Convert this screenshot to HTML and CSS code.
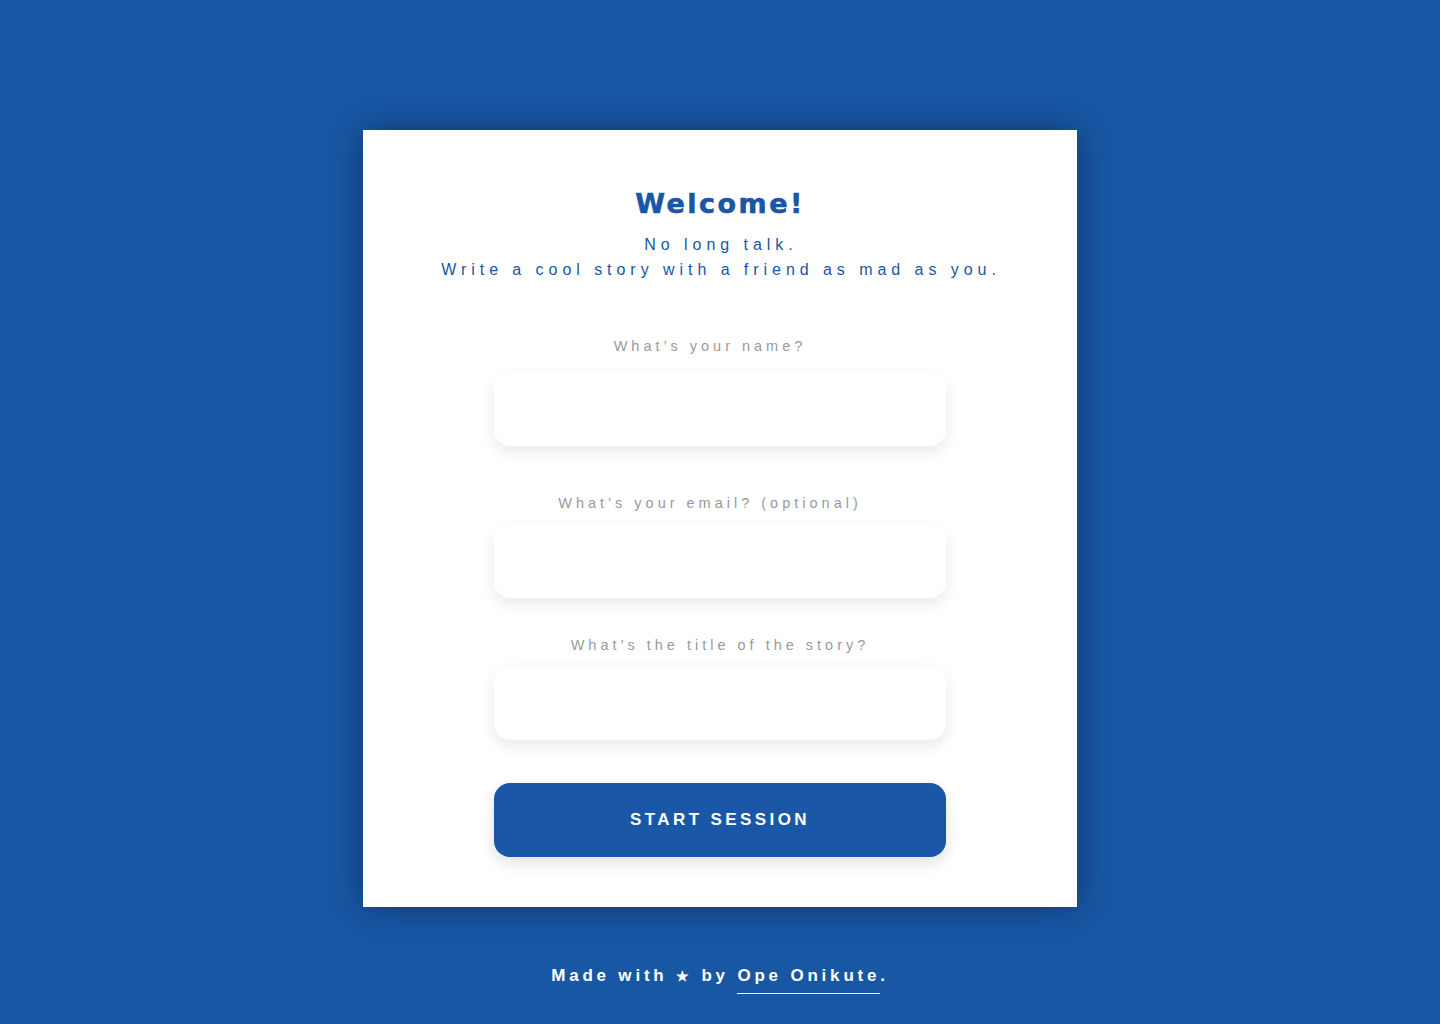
FILE: index.html
```html
<!DOCTYPE html>
<html lang="en">
<head>
<meta charset="utf-8">
<title>Welcome</title>
<link rel="stylesheet" href="styles.css">
</head>
<body>
<main class="card">
  <h1 class="title">Welcome!</h1>
  <p class="subtitle">No long talk.<br>Write a cool story with a friend as mad as you.</p>
  <form class="form">
    <label class="label label-first label-shift" for="name">What’s your name?</label>
    <input class="field" id="name" type="text">
    <label class="label label-second label-shift" for="email">What’s your email? (optional)</label>
    <input class="field" id="email" type="email">
    <label class="label label-third" for="title">What’s the title of the story?</label>
    <input class="field" id="title" type="text">
    <button class="button" type="button">START SESSION</button>
  </form>
</main>
<footer class="footer">Made with <span class="star">★</span> by <a class="author" href="#">Ope Onikute</a>.</footer>
</body>
</html>
```
FILE: styles.css
```css
* { box-sizing: border-box; }
html, body { margin: 0; padding: 0; }
body {
  background: #1857a4;
  font-family: "Liberation Sans", Arial, sans-serif;
  min-height: 1024px;
  display: flex;
  flex-direction: column;
  align-items: center;
}
.card {
  margin-top: 130px;
  width: 714px;
  height: 777px;
  background: #fff;
  box-shadow: 0 0 32px rgba(10, 30, 70, 0.55);
  padding: 56px 0 0;
  display: flex;
  flex-direction: column;
  align-items: center;
}
.title {
  margin: 0;
  font-family: "DejaVu Sans", sans-serif;
  font-weight: 900;
  font-size: 27px;
  line-height: 36px;
  letter-spacing: 2.5px;
  color: #1a56a6;
  -webkit-text-stroke: 0.6px #1a56a6;
}
.subtitle {
  margin: 10px 0 0;
  text-align: center;
  font-size: 16px;
  line-height: 25px;
  letter-spacing: 4.95px;
  color: #1a56a6;
  padding-left: 2px;
}
.form {
  display: flex;
  flex-direction: column;
  align-items: center;
  width: 452px;
}
.label {
  display: block;
  margin-top: 37px;
  margin-bottom: 11px;
  font-size: 14.5px;
  line-height: 20px;
  letter-spacing: 4px;
  color: #9a9a9a;
}
.label-shift { padding-right: 20px; }
.label-first {
  margin-top: 54px;
  margin-bottom: 16px;
}
.label-second { margin-top: 47px; }
.label-third { margin-top: 37px; }
.field {
  width: 452px;
  height: 74px;
  border: none;
  border-radius: 16px;
  background: #fff;
  box-shadow: 0 6px 16px rgba(0, 0, 0, 0.09);
  outline: none;
}
.button {
  margin-top: 43px;
  width: 452px;
  height: 74px;
  border: none;
  border-radius: 16px;
  background: #1a57a6;
  color: #fff;
  font-family: "Liberation Sans", Arial, sans-serif;
  font-weight: 700;
  font-size: 17px;
  letter-spacing: 3.4px;
  box-shadow: 0 6px 16px rgba(0, 0, 0, 0.12);
}
.footer {
  margin-top: 57px;
  color: #fff;
  font-weight: 700;
  font-size: 17px;
  line-height: 24px;
  letter-spacing: 3.8px;
}
.star { font-size: 14px; }
.author {
  color: #fff;
  text-decoration: none;
  border-bottom: 1px solid #fff;
  padding-bottom: 8px;
}
```
